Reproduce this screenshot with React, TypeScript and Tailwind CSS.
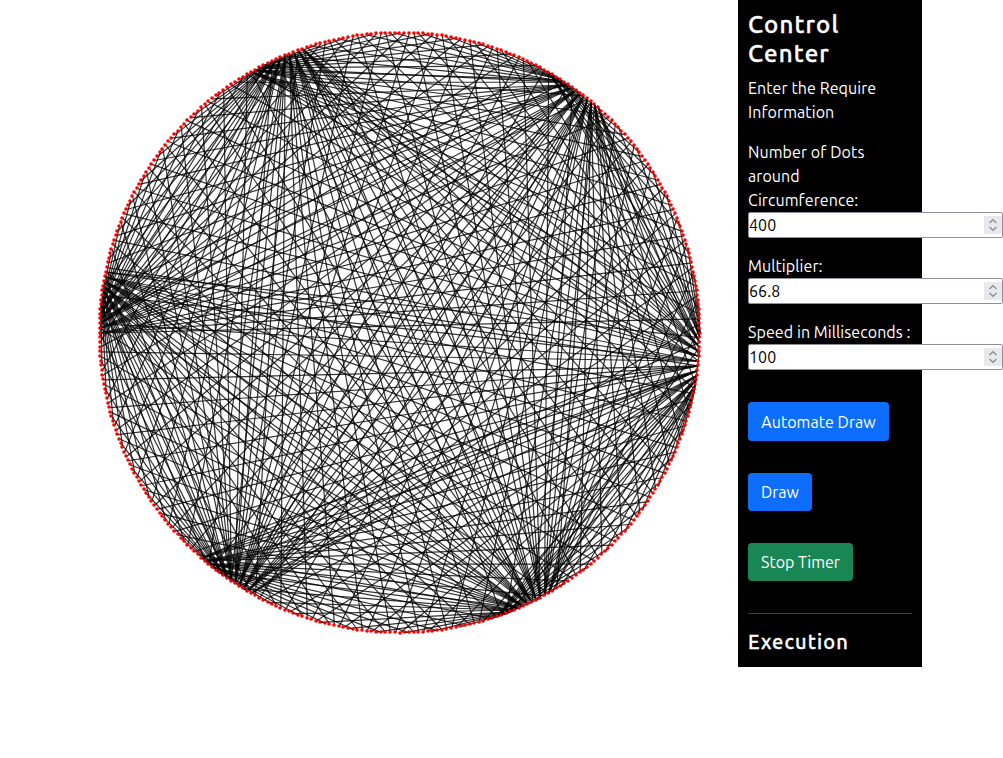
import React from "react";

const DOTS = 400;
const MULTIPLIER = 66.7;
const RADIUS = 300;
const CENTER_X = 400;
const CENTER_Y = 333;

function pointAt(index: number) {
  const angle = (index * 2 * Math.PI) / DOTS;
  return {
    x: CENTER_X + RADIUS * Math.cos(angle),
    y: CENTER_Y + RADIUS * Math.sin(angle),
  };
}

const indexes = Array.from({ length: DOTS }, (_, i) => i);

function CircleDrawing() {
  return (
    <svg width="738" height="667" viewBox="0 0 738 667" className="block shrink-0">
      <g stroke="#000" strokeWidth="1.2" strokeOpacity="0.8">
        {indexes.map((i) => {
          const a = pointAt(-i);
          const b = pointAt(Math.floor(i * MULTIPLIER) % DOTS);
          return <line key={i} x1={a.x} y1={a.y} x2={b.x} y2={b.y} />;
        })}
      </g>
      <g fill="#ff0000">
        {indexes.map((i) => {
          const p = pointAt(i);
          return <circle key={i} cx={Math.floor(p.x)} cy={Math.floor(p.y)} r="1.8" />;
        })}
      </g>
    </svg>
  );
}

function NumberField({ label, value }: { label: React.ReactNode; value: string }) {
  return (
    <label className="mb-4 block leading-6">
      <span className="block whitespace-nowrap">{label}</span>
      <span className="flex h-[26px] w-[255px] items-center rounded-[2px] border border-[#8f8f9d] bg-white">
        <input
          type="text"
          defaultValue={value}
          className="h-6 min-w-0 flex-1 bg-transparent text-base text-black outline-none"
        />
        <svg width="18" height="18" viewBox="0 0 18 18" className="shrink-0 bg-[#e9e9ed]">
          <path d="M5.5 7 9 3.7 12.5 7M5.5 11 9 14.3 12.5 11" fill="none" stroke="#8f8f9d" strokeWidth="1.5" />
        </svg>
      </span>
    </label>
  );
}

export default function App() {
  return (
    <div className="flex h-[758px] w-[1003px] items-start overflow-hidden bg-white font-['Ubuntu','Noto_Sans',sans-serif] text-base tracking-[0.08px]">
      <CircleDrawing />
      <aside className="h-[667px] w-[184px] shrink-0 bg-black p-2.5 text-white">
        <h2 className="mb-2 pt-px text-2xl leading-[28.8px] font-medium tracking-[1.2px] [-webkit-text-stroke:0.4px_white]">
          Control
          <br />
          Center
        </h2>
        <p className="-mt-px mb-4 leading-6 whitespace-nowrap">
          Enter the Require
          <br />
          Information
        </p>
        <NumberField
          label={
            <>
              Number of Dots
              <br />
              around
              <br />
              Circumference:
            </>
          }
          value="400"
        />
        <NumberField label="Multiplier:" value="66.8" />
        <NumberField label="Speed in Milliseconds :" value="100" />
        <div className="mt-8 flex flex-col items-start gap-8">
          <button className="h-[39px] w-[141px] rounded bg-[#0d6efd] px-[13px] pt-0.5 tracking-[0.04px] whitespace-nowrap">Automate Draw</button>
          <button className="h-[38px] rounded bg-[#0d6efd] px-[13px] pt-px tracking-normal whitespace-nowrap">Draw</button>
          <button className="h-[38px] rounded bg-[#198754] px-[13px] pt-px tracking-normal whitespace-nowrap">Stop Timer</button>
        </div>
        <hr className="mt-8 mb-4 border-t border-[#404040]" />
        <h3 className="text-xl leading-6 font-medium tracking-[1.1px] [-webkit-text-stroke:0.3px_white]">Execution</h3>
      </aside>
    </div>
  );
}
